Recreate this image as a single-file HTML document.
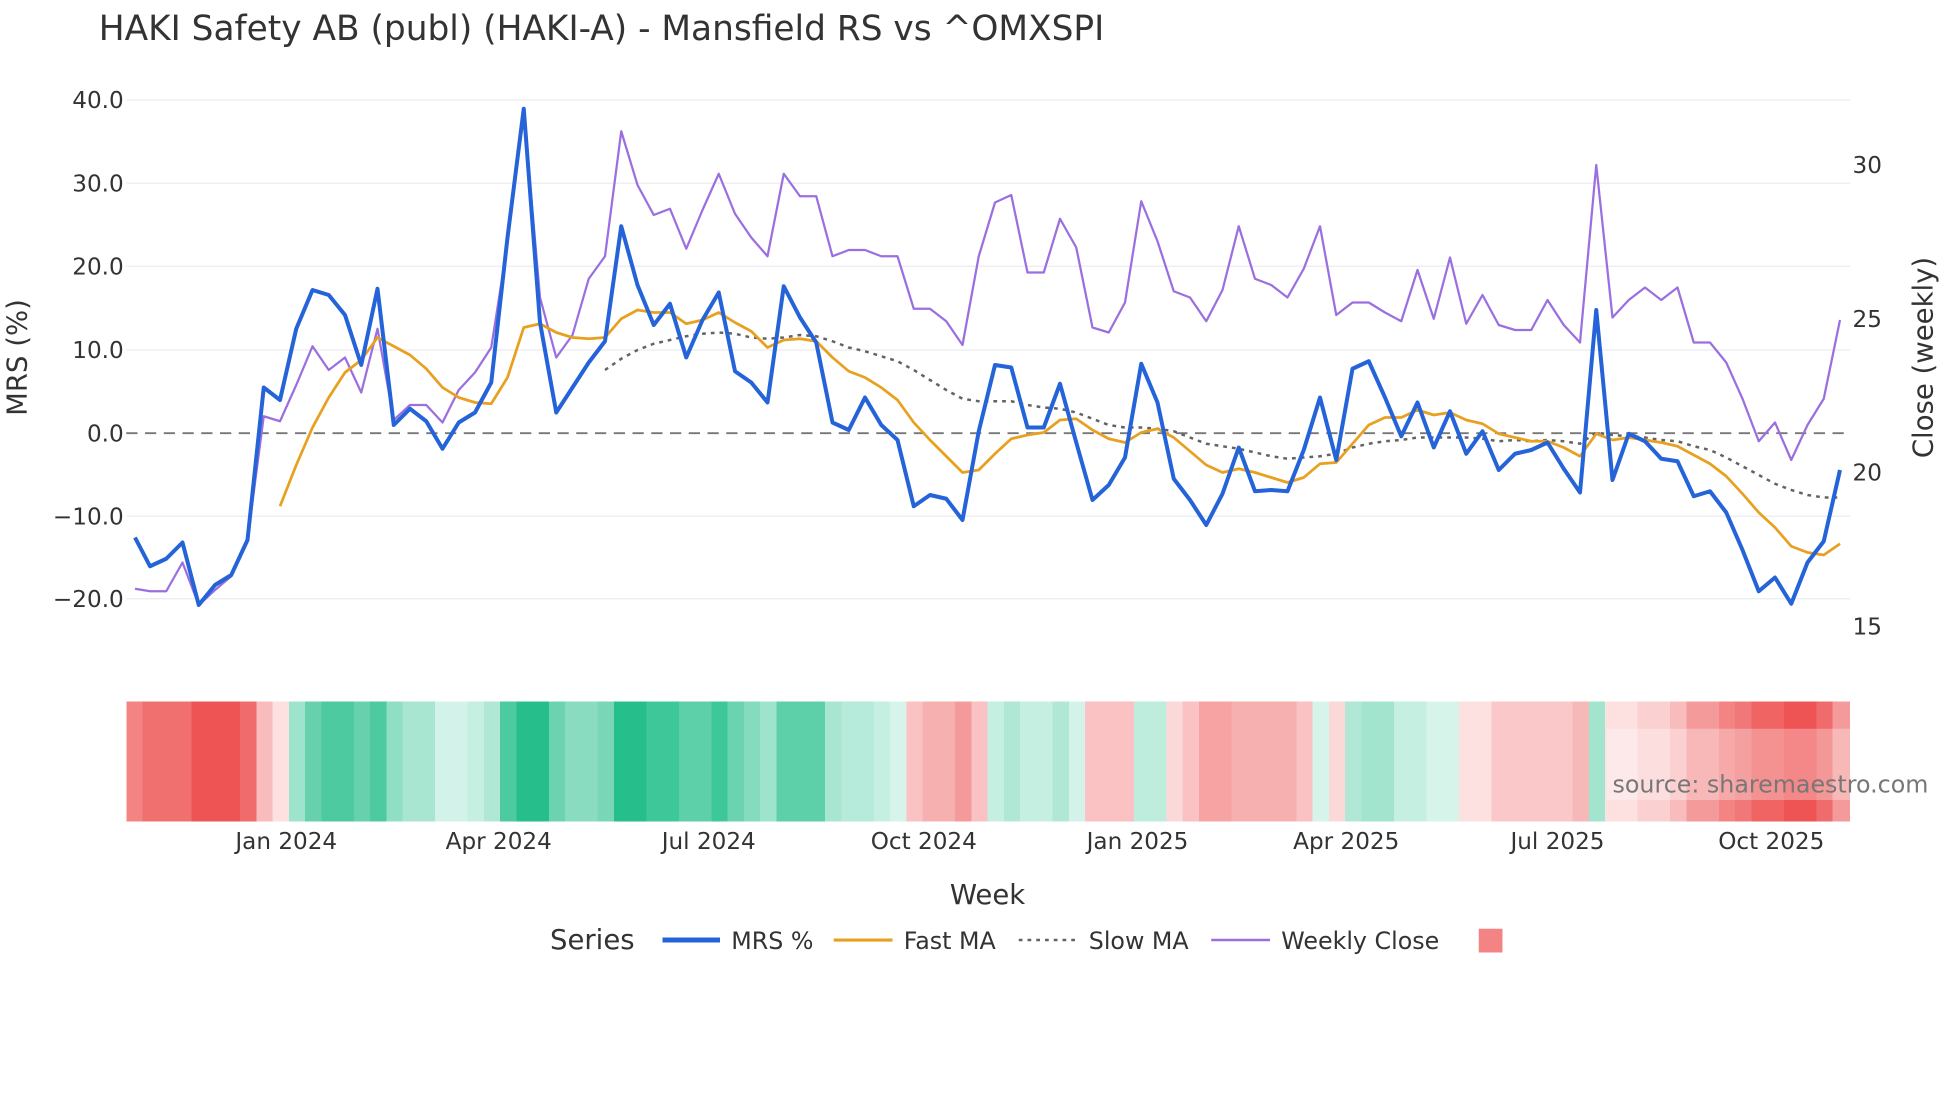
<!DOCTYPE html>
<html><head><meta charset="utf-8"><style>
html,body{margin:0;padding:0;background:#fff;}
svg{display:block;font-family:"DejaVu Sans","Liberation Sans",sans-serif;}
</style></head><body>
<svg width="1960" height="1102" viewBox="0 0 1568 881.6" xmlns="http://www.w3.org/2000/svg">
<rect width="1568" height="882" fill="#fff"/>
<text x="79" y="32" font-size="27.5" fill="#333">HAKI Safety AB (publ) (HAKI-A) - Mansfield RS vs ^OMXSPI</text>
<g stroke="#ececf0" stroke-width="1">
<line x1="101" x2="1480" y1="80" y2="80"/><line x1="101" x2="1480" y1="146.5" y2="146.5"/>
<line x1="101" x2="1480" y1="213" y2="213"/><line x1="101" x2="1480" y1="280" y2="280"/>
<line x1="101" x2="1480" y1="413" y2="413"/><line x1="101" x2="1480" y1="479" y2="479"/>
</g>
<line x1="101" x2="1480" y1="346.5" y2="346.5" stroke="#777" stroke-width="1.5" stroke-dasharray="9,6"/>
<g font-size="18.5" fill="#333" text-anchor="end">
<text x="99" y="86.5">40.0</text><text x="99" y="153">30.0</text><text x="99" y="219.5">20.0</text>
<text x="99" y="286.5">10.0</text><text x="99" y="353">0.0</text><text x="99" y="419.5">−10.0</text><text x="99" y="485.5">−20.0</text>
</g>
<g font-size="18.5" fill="#333">
<text x="1482" y="138.5">30</text><text x="1482" y="261.5">25</text><text x="1482" y="384.5">20</text><text x="1482" y="507.5">15</text>
</g>
<text transform="translate(21,286) rotate(-90)" font-size="22" fill="#333" text-anchor="middle">MRS (%)</text>
<text transform="translate(1546,286) rotate(-90)" font-size="22" fill="#333" text-anchor="middle">Close (weekly)</text>

<g shape-rendering="crispEdges">
<rect x="101" y="561" width="13" height="96" fill="#f48484"/>
<rect x="114" y="561" width="39" height="96" fill="#f07070"/>
<rect x="153" y="561" width="39" height="96" fill="#ef5454"/>
<rect x="192" y="561" width="13" height="96" fill="#f06b6b"/>
<rect x="205" y="561" width="13" height="96" fill="#f8bcbc"/>
<rect x="218" y="561" width="13" height="96" fill="#fde0e0"/>
<rect x="231" y="561" width="13" height="96" fill="#9ee4cc"/>
<rect x="244" y="561" width="13" height="96" fill="#66d1ac"/>
<rect x="257" y="561" width="26" height="96" fill="#4ecaa0"/>
<rect x="283" y="561" width="13" height="96" fill="#66d1ac"/>
<rect x="296" y="561" width="13" height="96" fill="#4ecaa0"/>
<rect x="309" y="561" width="13" height="96" fill="#8fdfc4"/>
<rect x="322" y="561" width="26" height="96" fill="#a8e6d1"/>
<rect x="348" y="561" width="26" height="96" fill="#d3f3ea"/>
<rect x="374" y="561" width="13" height="96" fill="#c5efe1"/>
<rect x="387" y="561" width="13" height="96" fill="#b0e8d5"/>
<rect x="400" y="561" width="13" height="96" fill="#4ecaa0"/>
<rect x="413" y="561" width="26" height="96" fill="#26bf8c"/>
<rect x="439" y="561" width="13" height="96" fill="#6bd3b0"/>
<rect x="452" y="561" width="26" height="96" fill="#8adcc0"/>
<rect x="478" y="561" width="13" height="96" fill="#79d7b8"/>
<rect x="491" y="561" width="26" height="96" fill="#26bf8c"/>
<rect x="517" y="561" width="26" height="96" fill="#3ec89a"/>
<rect x="543" y="561" width="26" height="96" fill="#5dcfa9"/>
<rect x="569" y="561" width="13" height="96" fill="#3ec89a"/>
<rect x="582" y="561" width="13" height="96" fill="#6bd3b0"/>
<rect x="595" y="561" width="13" height="96" fill="#84dbbe"/>
<rect x="608" y="561" width="13" height="96" fill="#9ee4cc"/>
<rect x="621" y="561" width="39" height="96" fill="#5dcfa9"/>
<rect x="660" y="561" width="13" height="96" fill="#a8e6d1"/>
<rect x="673" y="561" width="26" height="96" fill="#b6eadb"/>
<rect x="699" y="561" width="13" height="96" fill="#c5efe1"/>
<rect x="712" y="561" width="13" height="96" fill="#d6f4ea"/>
<rect x="725" y="561" width="13" height="96" fill="#fac2c2"/>
<rect x="738" y="561" width="26" height="96" fill="#f7b0b0"/>
<rect x="764" y="561" width="13" height="96" fill="#f59a9a"/>
<rect x="777" y="561" width="13" height="96" fill="#fac2c2"/>
<rect x="790" y="561" width="13" height="96" fill="#c5efe1"/>
<rect x="803" y="561" width="13" height="96" fill="#b0e8d5"/>
<rect x="816" y="561" width="26" height="96" fill="#c5efe1"/>
<rect x="842" y="561" width="13" height="96" fill="#b0e8d5"/>
<rect x="855" y="561" width="13" height="96" fill="#d3f3ea"/>
<rect x="868" y="561" width="39" height="96" fill="#fac2c2"/>
<rect x="907" y="561" width="26" height="96" fill="#bfeddd"/>
<rect x="933" y="561" width="13" height="96" fill="#fcd9d9"/>
<rect x="946" y="561" width="13" height="96" fill="#fac2c2"/>
<rect x="959" y="561" width="26" height="96" fill="#f7a3a3"/>
<rect x="985" y="561" width="52" height="96" fill="#f7b0b0"/>
<rect x="1037" y="561" width="13" height="96" fill="#fac2c2"/>
<rect x="1050" y="561" width="13" height="96" fill="#d6f4ea"/>
<rect x="1063" y="561" width="13" height="96" fill="#fcd9d9"/>
<rect x="1076" y="561" width="13" height="96" fill="#b0e8d5"/>
<rect x="1089" y="561" width="26" height="96" fill="#a3e4cf"/>
<rect x="1115" y="561" width="26" height="96" fill="#c5efe1"/>
<rect x="1141" y="561" width="26" height="96" fill="#d6f4ea"/>
<rect x="1167" y="561" width="26" height="96" fill="#fde0e0"/>
<rect x="1193" y="561" width="65" height="96" fill="#fac8c8"/>
<rect x="1258" y="561" width="13" height="96" fill="#f7b8b8"/>
<rect x="1271" y="561" width="13" height="96" fill="#a3e4cf"/>
<rect x="1284" y="561" width="26" height="96" fill="#fde0e0"/>
<rect x="1310" y="561" width="26" height="96" fill="#fbd0d0"/>
<rect x="1336" y="561" width="13" height="96" fill="#f8bcbc"/>
<rect x="1349" y="561" width="26" height="96" fill="#f59a9a"/>
<rect x="1375" y="561" width="13" height="96" fill="#f48484"/>
<rect x="1388" y="561" width="13" height="96" fill="#f07878"/>
<rect x="1401" y="561" width="26" height="96" fill="#f06464"/>
<rect x="1427" y="561" width="26" height="96" fill="#ef5454"/>
<rect x="1453" y="561" width="13" height="96" fill="#f06b6b"/>
<rect x="1466" y="561" width="14" height="96" fill="#f59a9a"/>
</g>
<rect x="1285" y="583" width="195" height="57" fill="#fff" fill-opacity="0.3"/>
<text x="1290" y="634" font-size="19" fill="#777">source: sharemaestro.com</text>

<g font-size="18.5" fill="#333" text-anchor="middle">
<text x="229" y="679">Jan 2024</text><text x="399" y="679">Apr 2024</text><text x="567" y="679">Jul 2024</text><text x="739" y="679">Oct 2024</text>
<text x="910" y="679">Jan 2025</text><text x="1077" y="679">Apr 2025</text><text x="1246" y="679">Jul 2025</text><text x="1417" y="679">Oct 2025</text>
</g>
<text x="790" y="723" font-size="22" fill="#333" text-anchor="middle">Week</text>

<polyline fill="none" stroke="#9b6fe0" stroke-width="1.8" stroke-linejoin="round" points="108,471 120,473 133,473 146,450 159,484 172,472 185,461 198,432 211,333 224,337 237,308 250,277 263,296 276,286 289,314 302,263 315,336 328,324 341,324 354,338 367,312 380,298 393,278 406,195 419,88 432,238 445,286 458,268 471,223 484,205 497,105 510,148 523,172 536,167 549,199 562,168 575,139 588,171 601,190 614,205 627,139 640,157 653,157 666,205 679,200 692,200 705,205 718,205 731,247 744,247 757,257 770,276 783,205 796,162 809,156 822,218 835,218 848,175 861,198 874,262 887,266 900,242 913,161 926,193 939,233 952,238 965,257 978,232 991,181 1004,223 1017,228 1030,238 1043,215 1056,181 1069,252 1082,242 1095,242 1108,250 1121,257 1134,216 1147,255 1160,206 1173,259 1186,236 1199,260 1212,264 1225,264 1238,240 1251,260 1264,274 1277,132 1290,254 1303,240 1316,230 1329,240 1342,230 1355,274 1368,274 1381,290 1394,319 1407,353 1420,338 1433,368 1446,340 1459,319 1472,256"/>
<polyline fill="none" stroke="#636363" stroke-width="2" stroke-dasharray="3,4" points="484,296 497,287 510,280 523,275 536,272 549,269 562,267 575,266 588,267 601,270 614,271 627,270 640,268 653,269 666,273 679,278 692,281 705,285 718,289 731,296 744,304 757,312 770,319 783,321 796,321 809,321 822,324 835,326 848,327 861,330 874,335 887,340 900,342 913,342 926,343 939,345 952,350 965,355 978,357 991,359 1004,362 1017,365 1030,367 1043,366 1056,365 1069,363 1082,358 1095,355 1108,353 1121,352 1134,350 1147,350 1160,350 1173,350 1186,351 1199,353 1212,352 1225,353 1238,352 1251,353 1264,355 1277,346 1290,348 1303,349 1316,350 1329,352 1342,353 1355,357 1368,360 1381,366 1394,373 1407,380 1420,387 1433,392 1446,396 1459,398 1472,398"/>
<polyline fill="none" stroke="#e8a020" stroke-width="2.2" stroke-linejoin="round" points="224,405 237,372 250,342 263,318 276,298 289,288 302,270 315,277 328,284 341,295 354,310 367,318 380,322 393,323 406,302 419,262 432,259 445,266 458,270 471,271 484,270 497,255 510,248 523,250 536,250 549,259 562,256 575,250 588,258 601,265 614,278 627,272 640,271 653,273 666,286 679,297 692,302 705,310 718,320 731,338 744,352 757,365 770,378 783,376 796,363 809,351 822,348 835,346 848,336 861,335 874,344 887,351 900,354 913,346 926,343 939,350 952,361 965,372 978,378 991,375 1004,378 1017,382 1030,386 1043,382 1056,371 1069,370 1082,355 1095,340 1108,334 1121,334 1134,328 1147,332 1160,330 1173,336 1186,339 1199,347 1212,350 1225,353 1238,353 1251,358 1264,365 1277,347 1290,352 1303,350 1316,352 1329,354 1342,357 1355,364 1368,371 1381,381 1394,395 1407,410 1420,422 1433,437 1446,442 1459,444 1472,435"/>
<polyline fill="none" stroke="#2563d9" stroke-width="3.2" stroke-linejoin="round" points="108,430 120,453 133,447 146,434 159,484 172,468 185,460 198,432 211,310 224,320 237,263 250,232 263,236 276,252 289,292 302,231 315,340 328,327 341,337 354,359 367,338 380,330 393,306 406,190 419,87 432,258 445,330 458,310 471,290 484,273 497,181 510,228 523,260 536,243 549,286 562,256 575,234 588,297 601,306 614,322 627,229 640,254 653,274 666,338 679,344 692,318 705,340 718,352 731,405 744,396 757,399 770,416 783,345 796,292 809,294 822,342 835,342 848,307 861,354 874,400 887,388 900,366 913,291 926,322 939,383 952,400 965,420 978,395 991,358 1004,393 1017,392 1030,393 1043,360 1056,318 1069,368 1082,295 1095,289 1108,318 1121,349 1134,322 1147,358 1160,329 1173,363 1186,345 1199,376 1212,363 1225,360 1238,354 1251,375 1264,394 1277,248 1290,384 1303,347 1316,353 1329,367 1342,369 1355,397 1368,393 1381,410 1394,440 1407,473 1420,462 1433,483 1446,450 1459,433 1472,376"/>

<text x="440" y="759" font-size="22" fill="#333">Series</text>
<line x1="530" x2="576" y1="752" y2="752" stroke="#2563d9" stroke-width="4"/>
<text x="585" y="759" font-size="19" fill="#333">MRS %</text>
<line x1="667" x2="714" y1="752" y2="752" stroke="#e8a020" stroke-width="2.5"/>
<text x="723" y="759" font-size="19" fill="#333">Fast MA</text>
<line x1="815" x2="860" y1="752" y2="752" stroke="#636363" stroke-width="2" stroke-dasharray="3,4"/>
<text x="871" y="759" font-size="19" fill="#333">Slow MA</text>
<line x1="969" x2="1016" y1="752" y2="752" stroke="#9b6fe0" stroke-width="2"/>
<text x="1025" y="759" font-size="19" fill="#333">Weekly Close</text>
<rect x="1183" y="743" width="19" height="19" fill="#f48484"/>
</svg>
</body></html>
